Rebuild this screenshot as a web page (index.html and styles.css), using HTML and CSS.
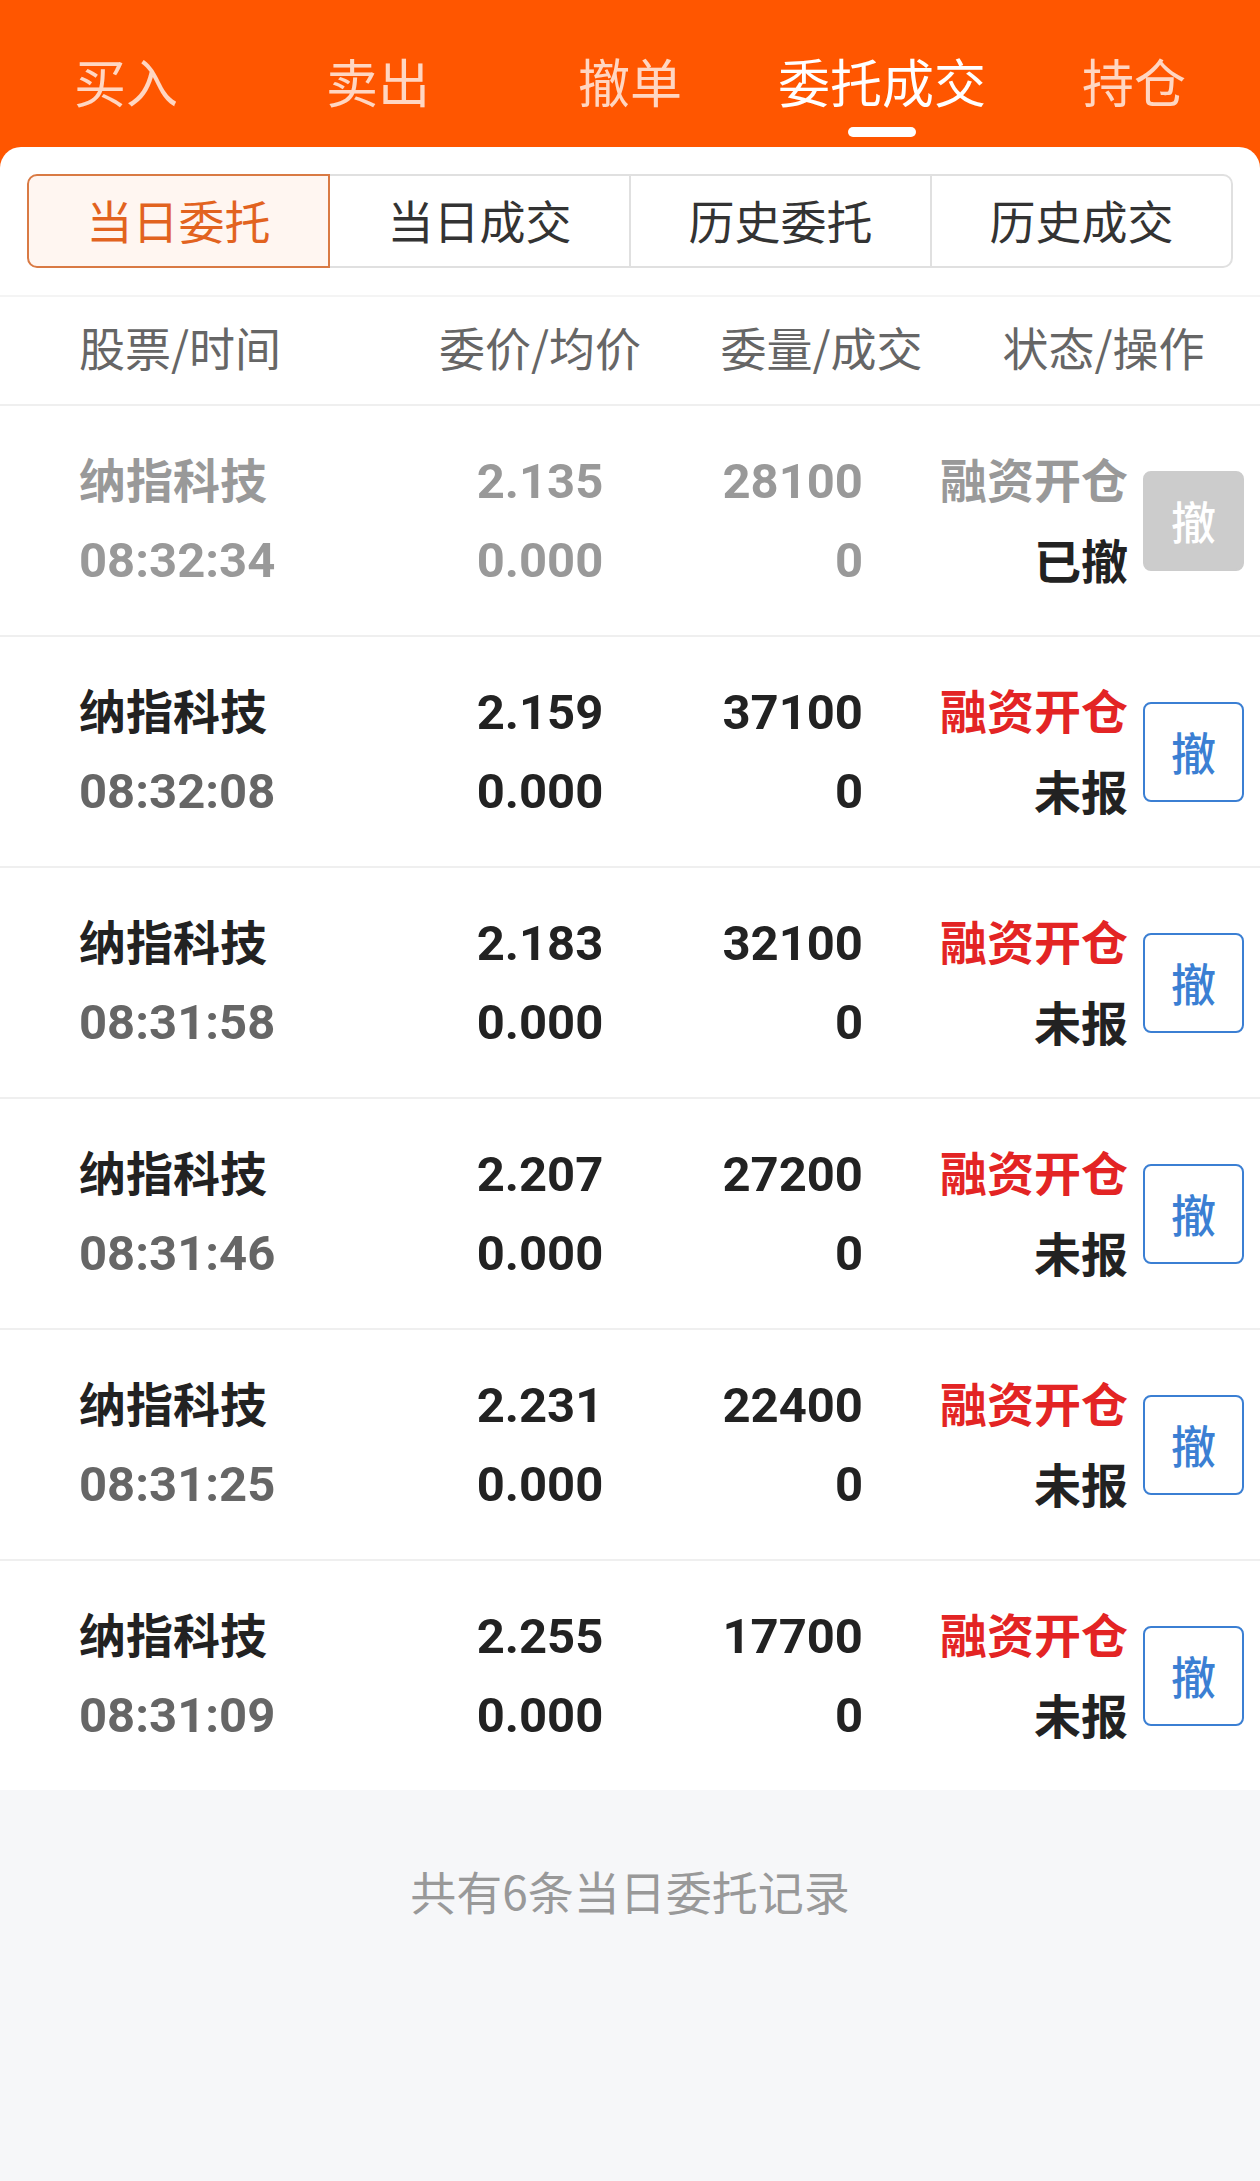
FILE: index.html
```html
<!DOCTYPE html>
<html lang="zh-CN">
<head>
    <meta charset="UTF-8">
    <meta name="viewport" content="width=device-width, initial-scale=1.0">
    <title>委托成交</title>
    <link rel="stylesheet" href="styles.css">
</head>
<body>
    <header class="topbar">
        <nav class="tabs">
            <div class="tab"><span>买入</span></div>
            <div class="tab"><span>卖出</span></div>
            <div class="tab"><span>撤单</span></div>
            <div class="tab active"><span>委托成交</span><i class="tab-line"></i></div>
            <div class="tab"><span>持仓</span></div>
        </nav>
    </header>

    <main class="card">
        <div class="seg">
            <div class="seg-item active">当日委托</div>
            <div class="seg-item">当日成交</div>
            <div class="seg-item">历史委托</div>
            <div class="seg-item">历史成交</div>
        </div>

        <div class="thead">
            <div class="th">股票/时间</div>
            <div class="th center">委价/均价</div>
            <div class="th center">委量/成交</div>
            <div class="th center">状态/操作</div>
        </div>

        <div class="row done">
            <div class="cell">
                <span class="name">纳指科技</span>
                <span class="num time">08:32:34</span>
            </div>
            <div class="cell center num"><span>2.135</span><span>0.000</span></div>
            <div class="cell right num"><span>28100</span><span>0</span></div>
            <div class="cell status">
                <div class="state"><span class="kind">融资开仓</span><span class="flag">已撤</span></div>
                <button class="cancel off">撤</button>
            </div>
        </div>

        <div class="row">
            <div class="cell">
                <span class="name">纳指科技</span>
                <span class="num time">08:32:08</span>
            </div>
            <div class="cell center num"><span>2.159</span><span>0.000</span></div>
            <div class="cell right num"><span>37100</span><span>0</span></div>
            <div class="cell status">
                <div class="state"><span class="kind">融资开仓</span><span class="flag">未报</span></div>
                <button class="cancel">撤</button>
            </div>
        </div>

        <div class="row">
            <div class="cell">
                <span class="name">纳指科技</span>
                <span class="num time">08:31:58</span>
            </div>
            <div class="cell center num"><span>2.183</span><span>0.000</span></div>
            <div class="cell right num"><span>32100</span><span>0</span></div>
            <div class="cell status">
                <div class="state"><span class="kind">融资开仓</span><span class="flag">未报</span></div>
                <button class="cancel">撤</button>
            </div>
        </div>

        <div class="row">
            <div class="cell">
                <span class="name">纳指科技</span>
                <span class="num time">08:31:46</span>
            </div>
            <div class="cell center num"><span>2.207</span><span>0.000</span></div>
            <div class="cell right num"><span>27200</span><span>0</span></div>
            <div class="cell status">
                <div class="state"><span class="kind">融资开仓</span><span class="flag">未报</span></div>
                <button class="cancel">撤</button>
            </div>
        </div>

        <div class="row">
            <div class="cell">
                <span class="name">纳指科技</span>
                <span class="num time">08:31:25</span>
            </div>
            <div class="cell center num"><span>2.231</span><span>0.000</span></div>
            <div class="cell right num"><span>22400</span><span>0</span></div>
            <div class="cell status">
                <div class="state"><span class="kind">融资开仓</span><span class="flag">未报</span></div>
                <button class="cancel">撤</button>
            </div>
        </div>

        <div class="row">
            <div class="cell">
                <span class="name">纳指科技</span>
                <span class="num time">08:31:09</span>
            </div>
            <div class="cell center num"><span>2.255</span><span>0.000</span></div>
            <div class="cell right num"><span>17700</span><span>0</span></div>
            <div class="cell status">
                <div class="state"><span class="kind">融资开仓</span><span class="flag">未报</span></div>
                <button class="cancel">撤</button>
            </div>
        </div>
    </main>

    <footer class="footer">共有6条当日委托记录</footer>
</body>
</html>
```

FILE: styles.css
```css
* {
    box-sizing: border-box;
}

body {
    margin: 0;
    padding: 0;
    min-height: 2181px;
    font-family: "Noto Sans CJK SC", sans-serif;
    background: linear-gradient(to bottom, #ff5600 200px, #f6f7f9 200px);
}

.topbar {
    height: 147px;
    background-color: #ff5600;
}

.tabs {
    display: flex;
}

.tab {
    flex: 1;
    display: flex;
    flex-direction: column;
    align-items: center;
    padding-top: 47px;
    font-size: 52px;
    line-height: 68px;
    color: rgba(255, 255, 255, 0.76);
}

.tab.active {
    color: #fff;
}

.tab-line {
    display: block;
    width: 68px;
    height: 10px;
    margin-top: 12px;
    border-radius: 5px;
    background-color: #fff;
}

.card {
    background-color: #fff;
    border-radius: 21px 21px 0 0;
    padding-top: 27px;
}

.seg {
    display: flex;
    height: 94px;
    margin: 0 27px;
}

.seg-item {
    flex: 1;
    display: flex;
    align-items: center;
    justify-content: center;
    margin-left: -2px;
    padding-bottom: 4px;
    border: 2px solid #e0e0e0;
    font-size: 46px;
    color: #333;
}

.seg-item:first-child {
    margin-left: 0;
    border-radius: 10px 0 0 10px;
}

.seg-item:last-child {
    border-radius: 0 10px 10px 0;
}

.seg-item.active {
    position: relative;
    z-index: 1;
    border-color: #d97a44;
    background-color: #fff6f1;
    color: #e2631f;
}

.thead,
.row {
    display: grid;
    grid-template-columns: 321px 280px 283px minmax(0, 1fr);
    padding: 0 16px 0 79px;
}

.thead {
    height: 109px;
    margin-top: 27px;
    border-top: 2px solid #f4f4f4;
    align-items: center;
    padding-bottom: 9px;
}

.th {
    font-size: 46px;
    color: #666;
    white-space: nowrap;
}

.center {
    text-align: center;
}

.right {
    text-align: right;
    padding-right: 100px;
}

.row {
    height: 231px;
    border-top: 2px solid #efefef;
    align-items: center;
    color: #222;
    font-weight: bold;
}

.cell span {
    display: block;
    line-height: 79px;
    white-space: nowrap;
}

.num {
    font-family: Roboto, "Noto Sans CJK SC", sans-serif;
    font-size: 49px;
}

.name,
.kind,
.flag {
    font-size: 47px;
}

.cell .time {
    color: #666;
    line-height: 87px;
}

.cell .kind {
    color: #e32424;
    line-height: 75px;
}

.cell .flag {
    line-height: 87px;
}

.status {
    display: flex;
    align-items: center;
    justify-content: flex-end;
}

.state {
    flex-shrink: 0;
    text-align: right;
}

.cancel {
    flex-shrink: 0;
    width: 101px;
    height: 100px;
    margin-left: 15px;
    padding: 0;
    border: 2px solid #3b7fd3;
    border-radius: 8px;
    background-color: #fff;
    color: #3b7fd3;
    font-family: "Noto Sans CJK SC", sans-serif;
    font-size: 45px;
    font-weight: 500;
}

.cancel.off {
    border-color: #cccccc;
    background-color: #cccccc;
    color: #fff;
}

.row.done .cell,
.row.done .time,
.row.done .kind {
    color: #999;
}

.row.done .flag {
    color: #222;
}

.footer {
    padding-top: 70px;
    text-align: center;
    font-size: 46px;
    line-height: 60px;
    color: #999;
}
```
